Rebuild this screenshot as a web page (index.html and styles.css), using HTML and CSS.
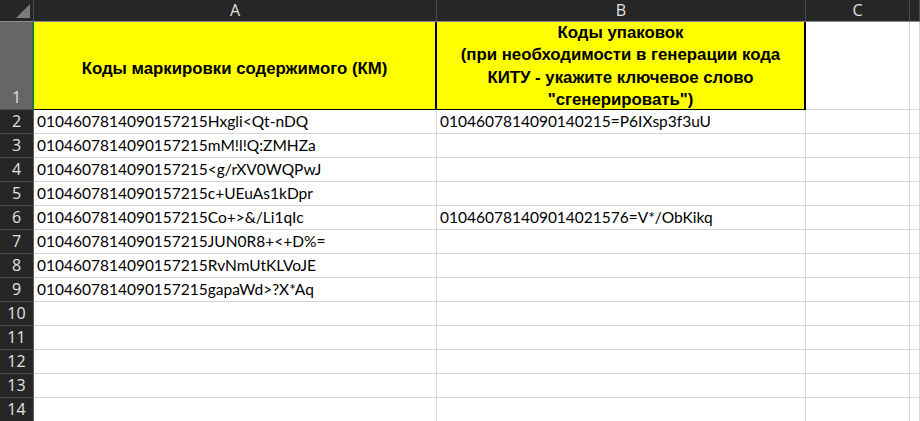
FILE: index.html
```html
<!DOCTYPE html>
<html lang="ru">
<head>
    <meta charset="UTF-8">
    <title>Коды маркировки</title>
    <link rel="stylesheet" href="styles.css">
</head>
<body>

    <div class="sheet">
        <!-- Column headers -->
        <div class="corner">
            <svg width="14" height="14" viewBox="0 0 14 14"><polygon points="14,0 14,14 0,14" fill="#7b7b7b"/></svg>
        </div>
        <div class="col-head">A</div>
        <div class="col-head">B</div>
        <div class="col-head">C</div>
        <div class="col-head"></div>

        <!-- Row 1: titles -->
        <div class="row-head row-head-active">1</div>
        <div class="cell title title-a">Коды маркировки содержимого (КМ)</div>
        <div class="cell title title-b">Коды упаковок<br>(при необходимости в генерации кода<br>КИТУ - укажите ключевое слово<br>"сгенерировать")</div>
        <div class="cell"></div>
        <div class="cell"></div>

        <div class="row-head">2</div>
        <div class="cell">0104607814090157215Hxgli&lt;Qt-nDQ</div>
        <div class="cell">0104607814090140215=P6IXsp3f3uU</div>
        <div class="cell"></div>
        <div class="cell"></div>

        <div class="row-head">3</div>
        <div class="cell">0104607814090157215mM!l!Q:ZMHZa</div>
        <div class="cell"></div>
        <div class="cell"></div>
        <div class="cell"></div>

        <div class="row-head">4</div>
        <div class="cell">0104607814090157215&lt;g/rXV0WQPwJ</div>
        <div class="cell"></div>
        <div class="cell"></div>
        <div class="cell"></div>

        <div class="row-head">5</div>
        <div class="cell">0104607814090157215c+UEuAs1kDpr</div>
        <div class="cell"></div>
        <div class="cell"></div>
        <div class="cell"></div>

        <div class="row-head">6</div>
        <div class="cell">0104607814090157215Co+&gt;&amp;/Li1qIc</div>
        <div class="cell">010460781409014021576=V*/ObKikq</div>
        <div class="cell"></div>
        <div class="cell"></div>

        <div class="row-head">7</div>
        <div class="cell">0104607814090157215JUN0R8+&lt;+D%=</div>
        <div class="cell"></div>
        <div class="cell"></div>
        <div class="cell"></div>

        <div class="row-head">8</div>
        <div class="cell">0104607814090157215RvNmUtKLVoJE</div>
        <div class="cell"></div>
        <div class="cell"></div>
        <div class="cell"></div>

        <div class="row-head">9</div>
        <div class="cell">0104607814090157215gapaWd&gt;?X*Aq</div>
        <div class="cell"></div>
        <div class="cell"></div>
        <div class="cell"></div>

        <div class="row-head">10</div>
        <div class="cell"></div>
        <div class="cell"></div>
        <div class="cell"></div>
        <div class="cell"></div>

        <div class="row-head">11</div>
        <div class="cell"></div>
        <div class="cell"></div>
        <div class="cell"></div>
        <div class="cell"></div>

        <div class="row-head">12</div>
        <div class="cell"></div>
        <div class="cell"></div>
        <div class="cell"></div>
        <div class="cell"></div>

        <div class="row-head">13</div>
        <div class="cell"></div>
        <div class="cell"></div>
        <div class="cell"></div>
        <div class="cell"></div>

        <div class="row-head">14</div>
        <div class="cell"></div>
        <div class="cell"></div>
        <div class="cell"></div>
        <div class="cell"></div>
    </div>

</body>
</html>
```

FILE: styles.css
```css
/* Spreadsheet colours */
:root {
    --head-bg: #262626;
    --head-active: #666666;
    --head-line: #4a4a4a;
    --head-text: #e2e2e2;
    --grid-line: #d6d6d6;
    --accent: #217346;
    --title-bg: #ffff00;
}

* { box-sizing: border-box; margin: 0; padding: 0; }

body {
    background: #ffffff;
    overflow: hidden;
}

/* Whole sheet: row header column + columns A..D */
.sheet {
    display: grid;
    grid-template-columns: 34px 403px 369px 104px 1fr;
    grid-template-rows: 22px 88px repeat(13, 24px);
    width: 920px;
}

/* Top-left select-all corner */
.corner {
    background: var(--head-bg);
    border-right: 1px solid var(--head-line);
    border-bottom: 1px solid #8c8c8c;
    display: flex;
    justify-content: flex-end;
    align-items: flex-end;
    padding: 0 3px 3px 0;
}

.col-head {
    background: var(--head-bg);
    border-right: 1px solid var(--head-line);
    border-bottom: 1px solid #8c8c8c;
    color: var(--head-text);
    font-family: "Open Sans", sans-serif;
    font-size: 16px;
    line-height: 21px;
    text-align: center;
}

.row-head {
    background: var(--head-bg);
    border-right: 1px solid #5c5c5c;
    border-bottom: 1px solid var(--head-line);
    color: var(--head-text);
    font-family: "Open Sans", sans-serif;
    font-size: 16px;
    line-height: 23px;
    text-align: center;
    display: flex;
    align-items: flex-end;
    justify-content: center;
}

.row-head-active {
    background: var(--head-active);
    border-right: 2px solid var(--accent);
    padding-left: 1px;
}

/* Regular data cell */
.cell {
    border-right: 1px solid var(--grid-line);
    border-bottom: 1px solid var(--grid-line);
    font-family: "Lato", sans-serif;
    font-size: 15.5px;
    line-height: 23px;
    padding-left: 3px;
    color: #000000;
    white-space: nowrap;
    overflow: hidden;
}

/* Yellow title cells in row 1 */
.title {
    background: var(--title-bg);
    border-right: 2px solid #000000;
    border-bottom: 1px solid #000000;
    font-family: "Liberation Sans", Arial, sans-serif;
    font-weight: bold;
    font-size: 16.8px;
    text-align: center;
    white-space: normal;
    overflow: visible;
    padding: 0;
}

.title-a {
    display: flex;
    align-items: center;
    justify-content: center;
    padding-top: 5px;
}

.title-b {
    line-height: 22.4px;
    padding-top: 0;
    position: relative;
    z-index: 1;
}
```
